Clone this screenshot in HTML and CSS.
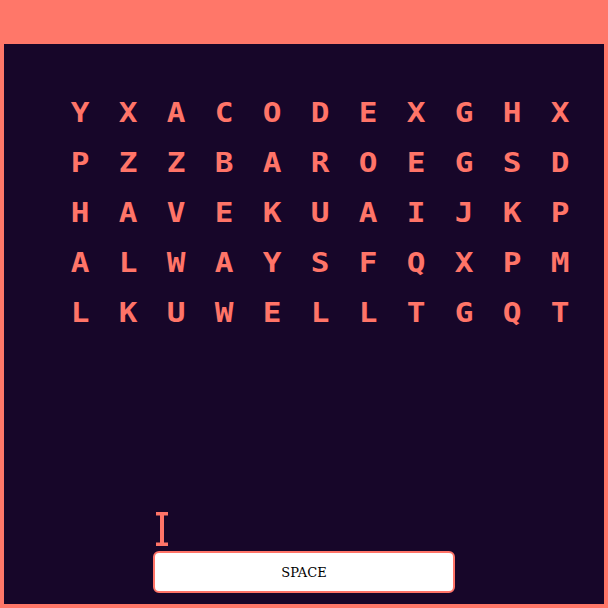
FILE: index.html
```html
<!DOCTYPE html>
<html>
<head>
<meta charset="utf-8">
<link rel="stylesheet" href="styles.css">
</head>
<body>
<main class="panel">
  <div class="grid">
    <span>Y</span><span>X</span><span>A</span><span>C</span><span>O</span><span>D</span><span>E</span><span>X</span><span>G</span><span>H</span><span>X</span>
    <span>P</span><span>Z</span><span>Z</span><span>B</span><span>A</span><span>R</span><span>O</span><span>E</span><span>G</span><span>S</span><span>D</span>
    <span>H</span><span>A</span><span>V</span><span>E</span><span>K</span><span>U</span><span>A</span><span>I</span><span>J</span><span>K</span><span>P</span>
    <span>A</span><span>L</span><span>W</span><span>A</span><span>Y</span><span>S</span><span>F</span><span>Q</span><span>X</span><span>P</span><span>M</span>
    <span>L</span><span>K</span><span>U</span><span>W</span><span>E</span><span>L</span><span>L</span><span>T</span><span>G</span><span>Q</span><span>T</span>
  </div>
  <div class="input-area">
    <svg class="caret" width="12" height="34" viewBox="0 0 12 34">
      <rect x="0" y="0" width="12" height="3.5" fill="#ff7468"/>
      <rect x="4" y="0" width="4" height="34" fill="#ff7468"/>
      <rect x="0" y="30.5" width="12" height="3.5" fill="#ff7468"/>
    </svg>
    <button class="space">SPACE</button>
  </div>
</main>
</body>
</html>
```
FILE: styles.css
```css
html, body {
  margin: 0;
  padding: 0;
}
body {
  background: #ff7769;
  padding: 44px 4px 4px 4px;
  width: 608px;
  height: 608px;
  box-sizing: border-box;
}
.panel {
  background: #170629;
  height: 560px;
  box-sizing: border-box;
  padding: 43px 0 0 52px;
  display: flex;
  flex-direction: column;
}
.grid {
  display: grid;
  grid-template-columns: repeat(11, 48px);
  grid-auto-rows: 50px;
  font-family: "DejaVu Sans Mono", monospace;
  font-weight: bold;
  font-size: 27px;
  color: #ff7468;
}
.grid span {
  display: flex;
  align-items: center;
  justify-content: center;
  transform: scaleX(1.15);
}
.input-area {
  margin-top: 175px;
  margin-left: 97px;
  display: flex;
  flex-direction: column;
  align-items: flex-start;
}
.caret {
  display: block;
  margin-left: 3px;
}
.space {
  margin-top: 5px;
  width: 302px;
  height: 42px;
  background: #ffffff;
  border: 2px solid #ff7468;
  border-radius: 6px;
  font-family: "DejaVu Serif", serif;
  font-size: 13px;
  color: #000;
  padding: 0;
}
```
